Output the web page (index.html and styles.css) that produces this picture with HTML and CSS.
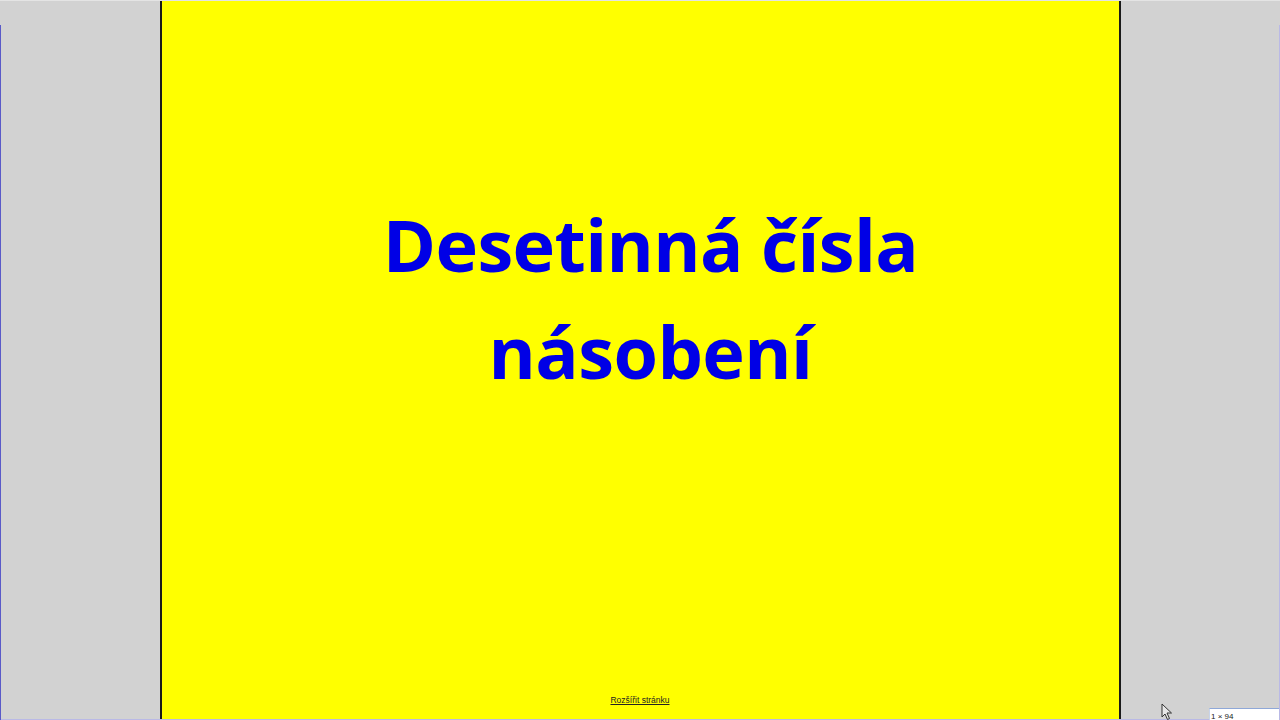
FILE: index.html
```html
<!DOCTYPE html>
<html lang="en">
<head>
  <meta charset="UTF-8">
  <title>Desetinná čísla násobení</title>
  <link rel="stylesheet" href="styles.css">
</head>
<body>
  <div class="screen">
    <div class="side side-left"></div>
    <div class="page">
      <h1 class="title">Desetinná čísla<br>násobení</h1>
      <a class="expand" href="#">Rozšířit stránku</a>
    </div>
    <div class="side side-right"></div>
  </div>
  <svg class="cursor" width="12" height="18" viewBox="0 0 12 18">
    <path d="M1 1 L1 14 L4 11 L6.5 16.5 L8.5 15.5 L6 10 L10.5 10 Z" fill="#e8e8e8" stroke="#333" stroke-width="1"/>
  </svg>
  <div class="tip">1 × 94</div>
</body>
</html>
```

FILE: styles.css
```css
* { margin: 0; padding: 0; box-sizing: border-box; }
html, body { height: 100%; overflow: hidden; }
body { font-family: "Open Sans", "Liberation Sans", sans-serif; background-color: #d2d2d2; }
.screen { display: flex; height: 720px; border-top: 1px solid #e4e4e4; border-bottom: 1px solid #b9b9e6; }
.side { background-color: #d2d2d2; flex-shrink: 0; }
.side-left { width: 160px; }
.side-right { flex-grow: 1; }
.page { width: 961px; background-color: #ffff00; border-left: 2px solid #1a1a1a; border-right: 2px solid #1a1a1a; display: flex; flex-direction: column; align-items: center; }
.title { margin-top: 190px; margin-left: 20px; font-size: 72px; line-height: 107px; font-weight: 700; color: #0000e6; text-align: center; letter-spacing: -0.6px; }
.expand { margin-top: auto; margin-bottom: 14px; margin-left: -1px; font-family: "Liberation Sans", Arial, sans-serif; font-size: 8.5px; color: #222; }
.cursor { position: absolute; left: 1161px; top: 703px; }
.tip { position: absolute; left: 1209px; top: 708px; width: 71px; height: 12px; background-color: #fff; border-top: 1px solid #8fa8d8; border-left: 1px solid #c8d4ea; padding-left: 1px; font-family: "Liberation Sans", Arial, sans-serif; font-size: 8px; line-height: 16px; color: #222; overflow: hidden; }
body::before, body::after { content: ""; position: absolute; top: 25px; bottom: 0; width: 1px; }
body::before { left: 0; background-color: #5a5ac8; }
body::after { right: 0; background-color: #b9b9e6; }
```
